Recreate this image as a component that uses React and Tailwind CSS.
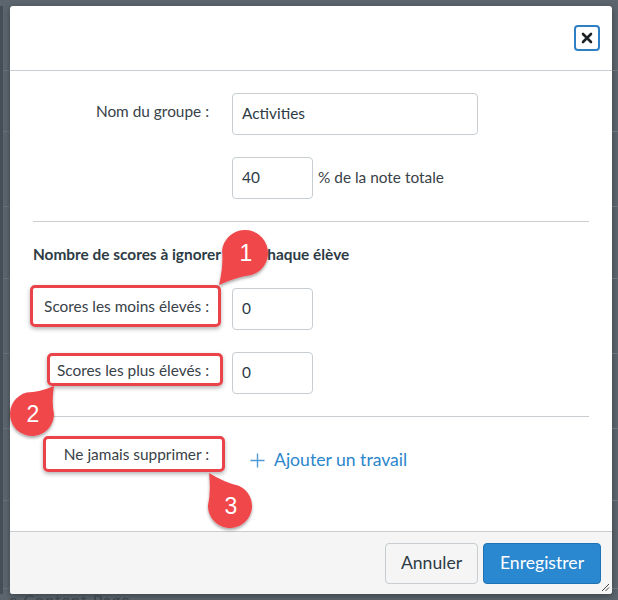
import React from "react";

function teardrop(cx, cy, r, tx, ty) {
  const dx = tx - cx;
  const dy = ty - cy;
  const d = Math.sqrt(dx * dx + dy * dy);
  const phi = Math.atan2(dy, dx);
  const theta = Math.acos(r / d);
  const p1x = cx + r * Math.cos(phi + theta);
  const p1y = cy + r * Math.sin(phi + theta);
  const p2x = cx + r * Math.cos(phi - theta);
  const p2y = cy + r * Math.sin(phi - theta);
  const m1x = (p1x + tx) / 2 + (cx - (p1x + tx) / 2) * 0.12;
  const m1y = (p1y + ty) / 2 + (cy - (p1y + ty) / 2) * 0.12;
  const m2x = (p2x + tx) / 2 + (cx - (p2x + tx) / 2) * 0.12;
  const m2y = (p2y + ty) / 2 + (cy - (p2y + ty) / 2) * 0.12;
  return `M ${tx} ${ty} Q ${m1x} ${m1y} ${p1x} ${p1y} A ${r} ${r} 0 1 1 ${p2x} ${p2y} Q ${m2x} ${m2y} ${tx} ${ty} Z`;
}

const badges = [
  { n: "1", cx: 245, cy: 253, r: 23, tx: 219, ty: 285 },
  { n: "2", cx: 32, cy: 414, r: 22, tx: 54, ty: 386 },
  { n: "3", cx: 230, cy: 506, r: 22, tx: 209, ty: 473 },
];

function Backdrop({ edge }) {
  const rows = [65, 61, 75, 72, 75, 75, 72, 88];
  return (
    <div className={"flex h-full " + (edge ? "w-[10px]" : "flex-1")}>
      {edge && <div className="w-[3px] h-full bg-[#454e57]" />}
      <div className="flex-1 flex flex-col">
        {rows.map((h, i) => (
          <div
            key={i}
            style={{ height: h }}
            className="border-b border-[#6a737b] shrink-0"
          />
        ))}
      </div>
    </div>
  );
}

function Label({ children }) {
  return (
    <div className="w-[176px] shrink-0 text-right pt-[8px] text-[15.4px] leading-[20px] text-[#394248]">
      {children}
    </div>
  );
}

function Input({ value, w }) {
  return (
    <div
      className={
        "h-[42px] shrink-0 border border-[#c7cdd1] rounded-[4px] bg-white flex items-center pl-[9px] text-[15.4px] text-[#2d3b45] " +
        w
      }
    >
      {value}
    </div>
  );
}

export default function App() {
  return (
    <div className="relative w-[618px] h-[600px] overflow-hidden bg-[#5c656d] flex flex-col font-[Lato,sans-serif]">
      <div className="h-[6px] shrink-0" />
      <div className="flex h-[588px] shrink-0">
        <Backdrop edge />
        <div className="w-[602px] shrink-0 bg-white rounded-[3px] flex flex-col overflow-hidden shadow-[0_2px_6px_rgba(0,0,0,0.35)]">
          {/* header */}
          <div className="h-[65px] shrink-0 border-b border-[#c7cdd1] flex items-center justify-end pr-[12px]">
            <div className="w-[26px] h-[26px] rounded-[4px] border-2 border-[#2f7fc4] flex items-center justify-center">
              <svg width="12" height="12" viewBox="0 0 12 12">
                <path
                  d="M2 2 L10 10 M10 2 L2 10"
                  stroke="#1d2226"
                  strokeWidth="2.6"
                  strokeLinecap="round"
                />
              </svg>
            </div>
          </div>
          {/* body */}
          <div className="flex-1 px-[23px] pt-[22px] flex flex-col">
            <div className="flex gap-[23px]">
              <Label>Nom du groupe :</Label>
              <Input value="Activities" w="w-[246px]" />
            </div>
            <div className="flex gap-[23px] mt-[22px] items-center">
              <div className="w-[176px] shrink-0" />
              <div className="flex items-center">
                <Input value="40" w="w-[81px]" />
                <span className="ml-[5px] text-[15.4px] text-[#394248]">
                  % de la note totale
                </span>
              </div>
            </div>
            <div className="mt-[22px] h-px bg-[#c7cdd1]" />
            <div className="mt-[22px] text-[15.4px] leading-[20px] font-bold text-[#2d3b45]">
              Nombre de scores à ignorer pour chaque élève
            </div>
            <div className="flex gap-[23px] mt-[24px]">
              <Label>Scores les moins élevés :</Label>
              <Input value="0" w="w-[81px]" />
            </div>
            <div className="flex gap-[23px] mt-[22px]">
              <Label>Scores les plus élevés :</Label>
              <Input value="0" w="w-[81px]" />
            </div>
            <div className="mt-[22px] h-px bg-[#c7cdd1]" />
            <div className="flex gap-[23px] mt-[19px]">
              <Label>Ne jamais supprimer :</Label>
              <div className="flex items-center pt-[12px] h-[36px] text-[17.6px] leading-[24px] text-[#2b86cb]">
                <svg width="15" height="15" viewBox="0 0 15 15" className="ml-[18px] mr-[9px]">
                  <path d="M7.5 0.5 V14.5 M0.5 7.5 H14.5" stroke="#4f9ad4" strokeWidth="1.4" />
                </svg>
                Ajouter un travail
              </div>
            </div>
          </div>
          {/* footer */}
          <div className="relative h-[63px] shrink-0 bg-[#f5f5f5] border-t border-[#c7cdd1] flex justify-end items-start pt-[11px] pr-[11px] gap-[5px]">
            <div className="w-[93px] h-[41px] rounded-[4px] border border-[#c7cdd1] bg-[#f5f5f5] flex items-center justify-center text-[17.6px] text-[#2d3b45]">
              Annuler
            </div>
            <div className="w-[118px] h-[41px] rounded-[4px] border border-[#1e72b6] bg-[#2a88d0] flex items-center justify-center text-[17.6px] text-white">
              Enregistrer
            </div>
            <svg
              width="9"
              height="9"
              viewBox="0 0 9 9"
              className="absolute right-[2px] bottom-[2px]"
            >
              <path d="M1 8 L8 1 M4.5 8 L8 4.5" stroke="#444" strokeWidth="1" />
            </svg>
          </div>
        </div>
        <Backdrop />
      </div>
      <div className="flex-1 overflow-hidden pl-[9px]">
        <div className="text-[16px] leading-[16px] mt-[-2px] text-[#3a444c] tracking-[1px]">
          e Content Page
        </div>
      </div>

      {/* annotation boxes */}
      <div className="absolute left-[30px] top-[285px] w-[191px] h-[42px] border-[3px] border-[#ea4349] rounded-[5px] shadow-[0_2px_4px_rgba(0,0,0,0.3)]" />
      <div className="absolute left-[47px] top-[353px] w-[176px] h-[33px] border-[3px] border-[#ea4349] rounded-[5px] shadow-[0_2px_4px_rgba(0,0,0,0.3)]" />
      <div className="absolute left-[43px] top-[436px] w-[182px] h-[36px] border-[3px] border-[#ea4349] rounded-[5px] shadow-[0_2px_4px_rgba(0,0,0,0.3)]" />

      {/* numbered badges */}
      <svg
        width="618"
        height="600"
        className="absolute left-0 top-0 pointer-events-none"
      >
        <defs>
          <filter id="sh" x="-30%" y="-30%" width="160%" height="160%">
            <feDropShadow dx="0" dy="2" stdDeviation="1.6" floodColor="#000" floodOpacity="0.35" />
          </filter>
        </defs>
        {badges.map((b) => (
          <g key={b.n}>
            <path
              d={teardrop(b.cx, b.cy, b.r, b.tx, b.ty)}
              fill="#f0464b"
              filter="url(#sh)"
            />
            <text
              x={b.cx + 1}
              y={b.cy + 8}
              textAnchor="middle"
              fontSize="23"
              fill="#fff"
              fontFamily="Liberation Sans, Arial, sans-serif"
            >
              {b.n}
            </text>
          </g>
        ))}
      </svg>
    </div>
  );
}
